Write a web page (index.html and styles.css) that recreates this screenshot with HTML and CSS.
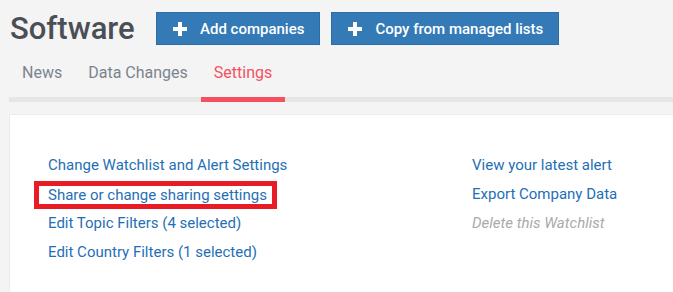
FILE: index.html
```html
<!DOCTYPE html>
<html lang="en">
<head>
    <meta charset="UTF-8">
    <title>Software - Settings</title>
    <link rel="stylesheet" href="styles.css">
</head>
<body>
    <div class="page">
        <header class="page-head">
            <h1>Software</h1>
            <button class="btn">
                <svg class="plus" viewBox="0 0 14 14" width="14" height="14"><path d="M5 0h4v5h5v4H9v5H5V9H0V5h5z" fill="#fff"/></svg>
                Add companies
            </button>
            <button class="btn">
                <svg class="plus" viewBox="0 0 14 14" width="14" height="14"><path d="M5 0h4v5h5v4H9v5H5V9H0V5h5z" fill="#fff"/></svg>
                Copy from managed lists
            </button>
        </header>
        <nav class="tabs">
            <a class="tab">News</a>
            <a class="tab">Data Changes</a>
            <a class="tab active">Settings</a>
        </nav>
        <section class="panel">
            <ul class="links">
                <li><a href="#">Change Watchlist and Alert Settings</a></li>
                <li class="marked"><a href="#">Share or change sharing settings</a></li>
                <li><a href="#">Edit Topic Filters (4 selected)</a></li>
                <li><a href="#">Edit Country Filters (1 selected)</a></li>
            </ul>
            <ul class="links side">
                <li><a href="#">View your latest alert</a></li>
                <li><a href="#">Export Company Data</a></li>
                <li class="disabled">Delete this Watchlist</li>
            </ul>
        </section>
    </div>
</body>
</html>
```

FILE: styles.css
```css
* {
    margin: 0;
    padding: 0;
    box-sizing: border-box;
}
body {
    font-family: Roboto, 'Liberation Sans', sans-serif;
    background-color: #f4f4f4;
    color: #4a4f55;
    overflow: hidden;
}
.page {
    padding-left: 9px;
}
.page-head {
    display: flex;
    align-items: center;
    height: 57px;
}
h1 {
    width: 147px;
    flex-shrink: 0;
    padding-left: 1px;
    font-size: 31px;
    font-weight: 500;
    color: #4a4f55;
}
.btn {
    display: flex;
    align-items: center;
    gap: 13px;
    height: 33px;
    padding: 0 15px 0 16px;
    margin-right: 11px;
    background-color: #337ab7;
    border: 1px solid #2e6da4;
    color: #fff;
    font-family: inherit;
    font-size: 15px;
    font-weight: 500;
}
.plus {
    display: block;
}
.tabs {
    display: flex;
    border-bottom: 5px solid #e6e6e6;
    margin-bottom: 12px;
}
.tab {
    padding: 6px 13px 15px;
    font-size: 16px;
    line-height: 19px;
    color: #7b848e;
    border-bottom: 5px solid transparent;
    margin-bottom: -5px;
}
.tab.active {
    color: #f4505f;
    border-bottom-color: #f4505f;
}
.panel {
    display: flex;
    background-color: #fff;
    border-top: 1px solid #ececec;
    border-left: 1px solid #ececec;
    height: 178px;
    padding: 36px 0 0 38px;
}
.links {
    list-style: none;
    width: 424px;
}
.links li {
    font-size: 15px;
    line-height: 29px;
    height: 29px;
}
.links a {
    color: #1f6fb5;
    text-decoration: none;
}
.links .marked {
    width: 243px;
    height: 28px;
    margin: 1px 0 0 -14px;
    padding-left: 9px;
    border: 5px solid #e81c24;
    line-height: 18px;
    white-space: nowrap;
}
.links.side {
    width: auto;
}
.links .disabled {
    color: #aaaaaa;
    font-style: italic;
}
```
